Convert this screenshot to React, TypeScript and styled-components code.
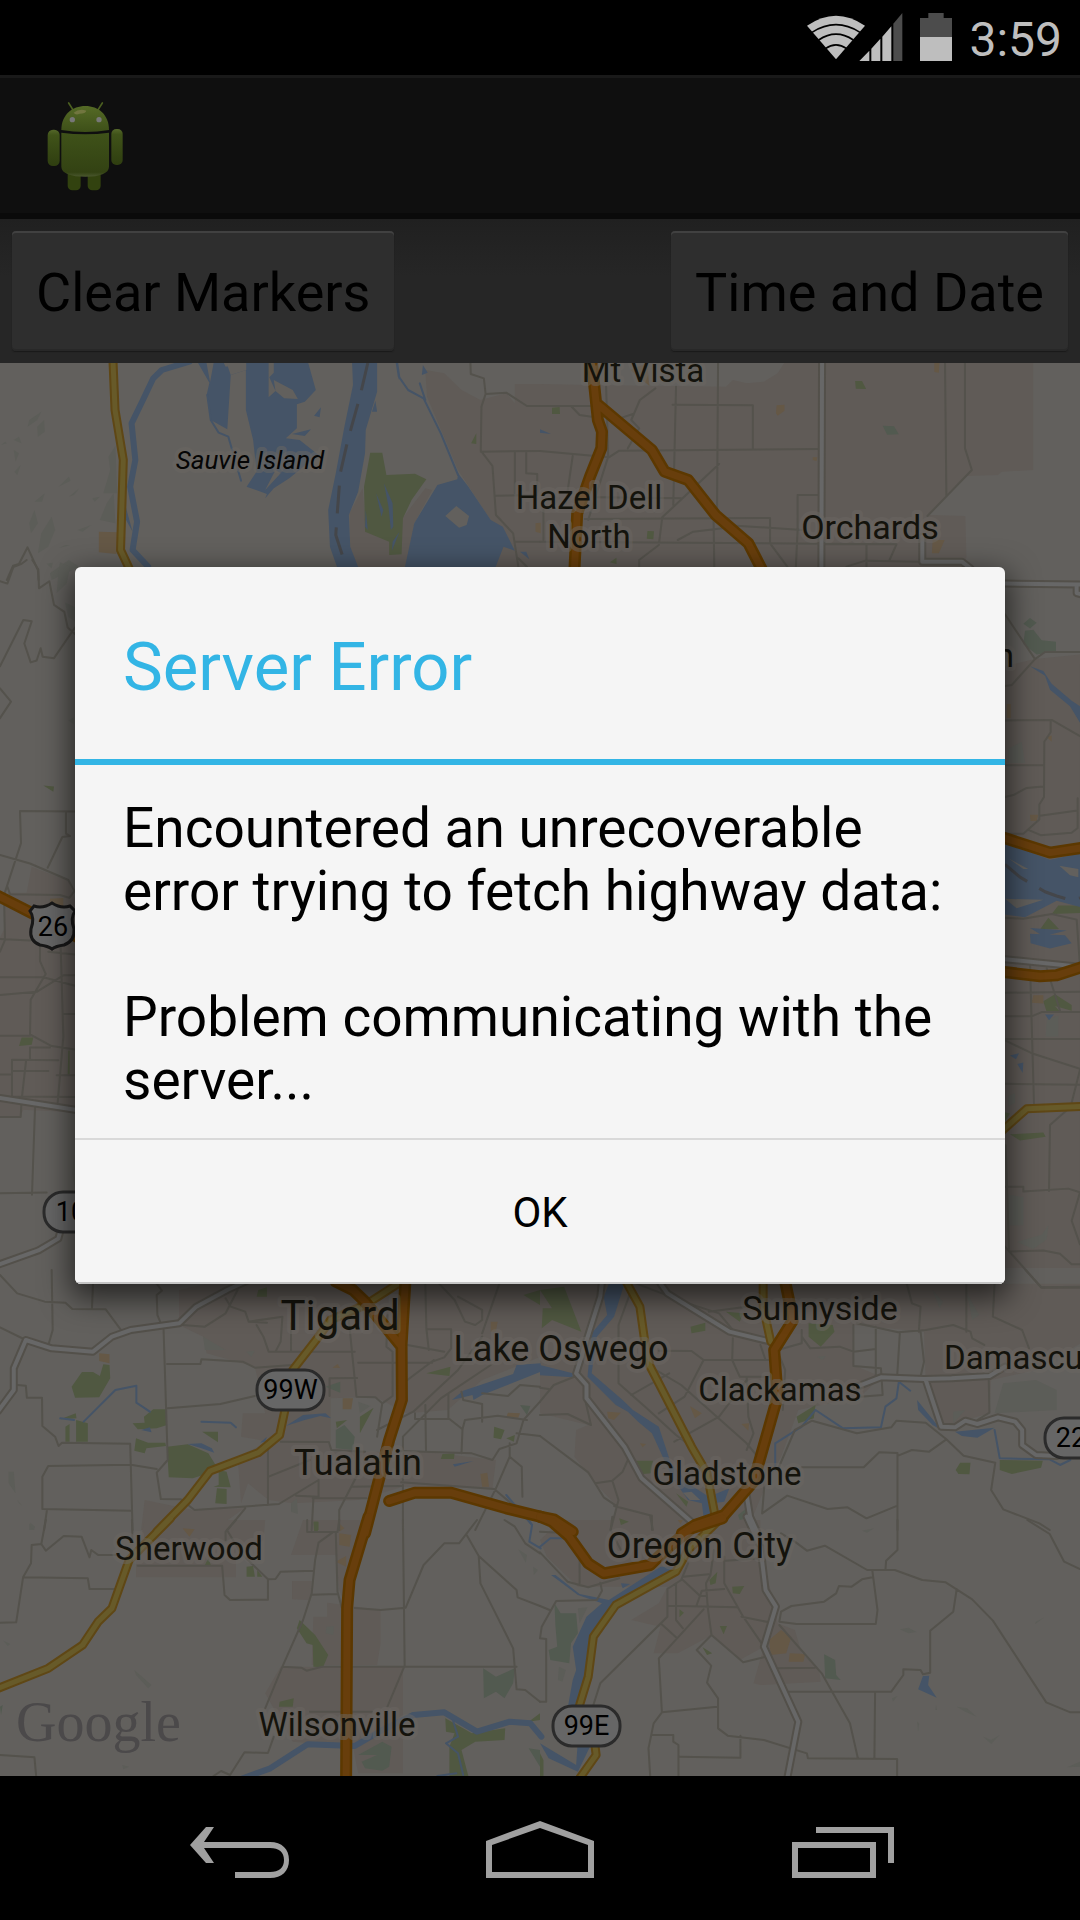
import React from "react";
import styled, { createGlobalStyle } from "styled-components";

const GlobalStyle = createGlobalStyle`
  *, *::before, *::after { box-sizing: border-box; }
  body {
    margin: 0;
    background: #000;
    font-family: Roboto, "Noto Sans", sans-serif;
    -webkit-font-smoothing: antialiased;
  }
  button { font-family: inherit; border: 0; margin: 0; padding: 0; cursor: pointer; }
`;

const Screen = styled.div`
  position: relative;
  display: flex;
  flex-direction: column;
  min-height: 100vh;
  overflow: hidden;
`;

const StatusBar = styled.header`
  display: flex;
  align-items: center;
  justify-content: flex-end;
  height: 75px;
  padding: 0 18px 2px;
  background: #000;
`;

const StatusIcon = styled.svg`
  display: block;
  flex: none;
  margin-right: 17px;
`;

const Clock = styled.time`
  font-size: 48px;
  line-height: 56px;
  color: #bebebe;
  padding-top: 6px;
`;

const ActionBar = styled.div`
  display: flex;
  align-items: center;
  height: 144px;
  padding: 2px 45px 0;
  background: #0f0f0f;
  border-top: 3px solid #191919;
  border-bottom: 6px solid #0a0a0a;
`;

const Toolbar = styled.div`
  display: flex;
  justify-content: space-between;
  padding: 12px;
  background: linear-gradient(#202020, #262626 40%);
`;

const ToolButton = styled.button`
  height: 120px;
  padding: 4px 24px 0;
  border-radius: 4px;
  background: #2e2e2e;
  box-shadow: inset 0 2px 0 #414141, inset 0 -2px 0 #282828, 0 1px 1px #1a1a1a;
  font-size: 54px;
  line-height: 64px;
  color: #000;
`;

const MapView = styled.svg`
  display: block;
  flex: 1 1 auto;
  width: 100%;
  background: #62605d;
`;

const NavBar = styled.nav`
  display: flex;
  height: 144px;
  padding: 0 90px;
  background: #000;
`;

const NavButton = styled.button`
  display: flex;
  flex: 1;
  align-items: center;
  justify-content: center;
  background: transparent;
`;

const Overlay = styled.div`
  position: absolute;
  inset: 75px 0 144px;
  display: flex;
  align-items: center;
  padding: 0 75px;
`;

const DialogShadow = styled.div`
  display: flex;
  flex: 1;
  border-radius: 6px;
  box-shadow: 0 10px 30px 4px rgba(0, 0, 0, 0.62);
`;

const Dialog = styled.section`
  flex: 1;
  overflow: hidden;
  border-radius: 6px;
  background: #f5f5f5;
`;

const DialogTitle = styled.h1`
  display: flex;
  align-items: center;
  height: 198px;
  margin: 0;
  padding: 8px 48px 0;
  border-bottom: 6px solid #33b5e5;
  font-size: 67px;
  font-weight: 400;
  line-height: 78px;
  color: #33b5e5;
`;

const DialogBody = styled.div`
  padding: 32px 48px 26px;
  font-size: 55px;
  line-height: 63px;
  color: #000;

  p { margin: 0; }
  p + p { margin-top: 63px; }
`;

const DialogButton = styled.button`
  display: block;
  width: 100%;
  height: 146px;
  padding-top: 4px;
  border-top: 2px solid #d9d9d9;
  border-bottom: 2px solid #c4c4c4;
  background: #f5f5f5;
  font-size: 42px;
  line-height: 50px;
  color: #000;
`;

type LayerKey =
  | "urban" | "hill" | "park" | "forest" | "sand" | "water" | "stream" | "creek"
  | "isle" | "border" | "minor" | "major" | "yellow" | "orange";

type Tile = { at: string } & Partial<Record<LayerKey, string>>;

const TILES: Tile[] = [
  {
    at: "translate(0 360) scale(0.34439 0.33333)",
    urban: "M1235,30 1290,40 1340,90 1395,120 1470,100 1495,130 1495,72 1570,72 1570,640 1440,640 1425,480 1330,330 1240,110Z M1053,385 1015,460 1017,560 1045,640 1180,640 1203,490 1255,390 1235,385 1165,480 1060,480Z",
    hill: "M120,155 85,180 80,200 108,180Z M128,180 130,215 110,230 108,200Z M335,258 340,400 300,400 320,330 315,290Z M330,400 335,490 290,480 310,430Z M100,450 110,490 90,520 85,490Z M200,350 205,362 170,380Z M230,385 215,405 200,410Z M150,470 160,510 140,560 110,580 120,520Z M130,400 122,425 100,425Z M55,230 62,250 40,240Z M290,410 275,425 268,415Z M200,600 230,620 150,660 145,640Z M40,270 55,280 45,305Z M15,245 20,250 3,255Z M265,495 240,515 225,510Z M60,315 50,345 42,335Z M190,555 203,556 170,565Z",
    park: "M1075,278 1110,278 1122,345 1205,341 1238,358 1195,420 1170,475 1166,583 1130,585 1130,545 1060,515 1057,380Z M1383,220 1383,252 1368,250Z",
    sand: "M287,515 340,517 338,582 287,577Z M1555,490 1570,488 1570,520 1555,515Z",
    water: "M575,9 650,9 655,20 715,9 895,9 917,90 885,125 862,133 862,205 830,235 870,240 925,285 905,300 840,355 795,385 770,415 775,402 716,380 745,335 735,240 714,150 714,30 670,45 660,208 612,180 600,105 608,68Z M1022,0 1025,75 1000,200 975,340 953,450 958,560 985,640 1047,640 1017,560 1013,465 1040,395 1060,280 1062,210 1095,95 1095,0Z M1330,340 1360,380 1425,480 1460,500 1495,572 1462,560 1432,640 1172,640 1203,490 1270,375 1328,358Z M1228,15 1242,38 1225,45Z M932,142 928,172 912,167Z M1090,122 1095,155 1080,155Z M848,222 903,208 885,228Z M365,440 385,515 366,480Z M1510,575 1528,575 1537,598Z M1115,370 1140,430 1142,500 1135,510 1128,440Z M1092,400 1113,450 1108,470Z M1160,515 1138,572 1140,545Z M1062,450 1068,510 1060,500Z",
    stream: "M550,5 470,30 445,55 415,120 382,190 393,300 378,380 398,485 385,570 430,620",
    creek: "M602,105 612,180 635,218 663,230 700,362 M1152,9 1158,50 1185,90 1230,115 1280,220 1330,345 M1152,0 1160,55 M1219,70 1235,120",
    isle: "M655,0 715,0 715,30 670,45Z M598,0 622,0 610,66Z M780,9 795,9 795,38 782,52 800,93 780,112Z M795,60 850,90 865,117 825,115 800,93Z M1325,438 1362,468 1355,495 1333,503 1293,468Z M800,330 815,340 770,390Z",
    border: "M1068,9 1045,110 1010,240 988,340 980,450 975,525 1005,620",
    minor: "M20,660 38,617 55,612 80,562 110,630 112,660 M1366,9 1367,42 1405,55 1410,102 1398,140 1396,272 1430,318 1440,465 1490,520 1505,620 M1410,102 1470,98 1530,138 1568,138 M1396,275 1568,273 M1495,275 1495,400 M1528,275 1528,340 1560,342 1560,405 1440,407 M1497,545 1568,545 M1505,595 1530,620",
    yellow: "M328,0 334,150 358,300 350,570 375,625",
  },
  {
    at: "translate(540 360) scale(0.34439 0.33333)",
    urban: "M0,72 145,75 540,80 560,60 600,70 650,65 690,40 715,0 1432,0 1432,330 1340,335 1330,345 1235,348 1130,465 1235,468 1238,590 1230,640 0,640Z",
    park: "M915,63 935,63 947,87 917,86Z M35,143 57,141 58,162 35,162Z M312,513 331,514 329,538 310,536Z M203,607 222,593 222,612Z",
    forest: "M995,197 1028,199 1042,223 1008,224Z",
    sand: "M687,136 710,134 710,152 690,167 685,160Z M1145,9 1160,9 1158,38 1145,36Z M262,30 318,78 310,9Z M1140,540 1175,540 1158,580 1138,580Z M792,292 805,292 803,303 792,300Z",
    water: "M0,208 32,222 0,218Z",
    minor: "M0,138 150,138 M90,138 115,165 150,170 M192,80 198,290 140,480 M0,273 200,292 230,272 808,267 M395,80 387,435 M385,134 618,136 618,268 M517,9 514,465 504,475 506,620 M335,85 290,120 265,180 288,205 255,265 M240,172 270,162 M95,288 75,430 M520,312 355,472 345,555 288,600 288,620 M130,477 668,474 668,550 718,620 M0,545 1035,553 M400,540 445,515 530,505 570,497 760,510 M748,510 748,405 808,405 M748,510 743,620 M1176,9 1180,408 M1234,9 1234,265 1254,330 1125,468 M1035,553 1015,600 M890,620 945,602 1105,605 M948,553 948,620 M165,412 410,415 M10,450 10,540 M830,553 1035,553",
    major: "M819,0 817,630 M1110,530 1110,605 1225,605 1250,625",
    orange: "M150,0 163,130 168,180 180,215 178,265 145,350 108,460 100,630 M170,135 325,270 362,335 430,360 510,465 605,550 645,630",
  },
  {
    at: "translate(0 560) scale(0.33333 0.47194)",
    urban: "M95,650 205,680 225,720 225,1170 70,1165 60,1180 0,1180 0,800 15,780 15,710 30,705 80,705Z",
    hill: "M180,5 210,15 200,50 170,70 175,30Z M195,90 225,100 225,130 205,120Z M140,8 158,6 155,18Z M205,340 222,333 222,348Z M222,1260 225,1330 217,1300Z",
    park: "M65,1012 100,1012 95,1027 57,1030Z M130,478 162,480 160,491Z M205,1040 209,1040 209,1090 203,1090Z",
    sand: "M150,718 190,716 190,735 150,735Z",
    minor: "M0,45 22,50 40,15 65,8 80,0 M97,0 115,20 117,60 148,45 162,95 193,110 203,143 225,157 M0,225 70,127 95,130 73,177 92,217 110,213 122,187 128,205 162,208 225,143 M0,272 33,300 0,335 M225,533 60,532 63,600 12,710 15,805 0,830 M198,533 198,580 210,585 187,587 143,652 M0,625 90,643 205,678 222,700 M22,692 30,708 180,710 208,716 225,700 M0,803 90,806 M120,820 120,850 137,877 92,932 90,1005 155,1030 225,1037 M145,830 225,836 M0,884 130,884 225,902 M0,922 110,915 190,880 225,880 M182,820 190,1010 173,1150 M190,962 225,962 M0,1008 90,1008 M175,1060 36,1059 36,1135 M0,1090 36,1090 M90,1033 150,1033 M90,1033 90,1058 M78,1062 66,1137 M36,1083 145,1083 M170,1092 225,1092 M0,1180 62,1180 64,1155 M105,1160 96,1345 M36,1137 225,1138 M0,1342 140,1340",
    major: "M0,1140 225,1165 M180,1425 175,1438 115,1463 -5,1493",
    orange: "M-5,712 100,750 235,800",
  },
  {
    at: "translate(980 560) scale(0.33333 0.47194)",
    urban: "M75,225 165,210 300,200 300,1500 75,1500Z",
    hill: "M85,400 125,385 135,430 85,430Z M200,975 235,965 235,1010 197,1010Z M85,1135 105,1130 105,1150 85,1158Z M110,1445 185,1430 205,1410 200,1440 160,1460Z M85,1345 130,1350 130,1410 85,1410Z",
    park: "M75,655 122,688 75,692Z M215,750 235,732 300,732 300,748Z M205,758 237,782 180,783Z M190,935 225,920 275,943 275,955 225,945 240,957 200,958Z M90,1217 190,1213 197,1222 120,1230Z M75,1170 90,1173 75,1190Z",
    forest: "M135,150 160,148 185,170 228,173 228,193 170,200 130,178Z M130,135 150,123 170,133 150,145Z",
    sand: "M150,540 175,540 170,553 152,553Z M160,922 190,922 190,940 155,938Z M80,305 92,305 92,335 80,335Z M200,375 215,372 215,385Z",
    water: "M60,595 210,635 300,622 300,735 230,722 135,757 60,750Z M150,225 190,235 215,262 275,298 300,310 300,345 270,310 210,275 195,245Z M150,792 255,795 275,812 210,823 152,812Z M150,780 260,785 190,797Z M90,1050 117,1045 108,1058Z M112,1068 130,1065 128,1087Z M195,963 222,963 207,975Z",
    isle: "M85,632 145,655 130,655Z M238,648 295,655 295,672 270,668Z M75,718 190,720 110,738Z",
    border: "M75,645 120,672 195,703 230,712 270,720 300,716",
    minor: "M75,115 165,210 195,195 300,195 M75,267 95,265 165,210 M75,340 215,339 300,373 M212,339 212,365 193,385 192,502 178,518 178,550 130,580 75,580 M75,435 190,435 M75,502 100,498 140,483 190,480 M180,542 293,531 M145,572 182,583 275,578 293,568 293,505 M75,758 130,760 215,750 290,762 300,860 M150,855 162,1155 M75,917 300,915 M75,967 155,967 185,958 300,958 M75,1015 300,1015 M75,1018 155,1045 300,1078 M75,1110 300,1112 M300,1080 275,1150 M262,1165 210,1197 207,1337 M77,1240 87,1460 M75,1328 130,1328 130,1338 265,1332 300,1340 275,1400 300,1450 M87,1465 190,1463 240,1470 275,1492 300,1492 M75,1455 185,1542 300,1542 M200,865 240,955",
    major: "M75,50 305,52 M290,52 290,70 305,73 M75,846 305,862",
    yellow: "M65,1210 140,1163 305,1158",
    orange: "M60,586 210,620 305,610 M60,872 180,882 230,880 305,863",
  },
  {
    at: "translate(0 1270) scale(0.34439 0.33333)",
    urban: "M520,60 600,41 1570,41 1570,260 1400,330 1300,420 1180,430 1090,380 960,385 960,515 780,515 700,500 705,430 770,430 740,290 600,250 590,200 520,165Z M780,515 955,515 960,545 1230,545 1440,570 1430,655 1170,650 1040,690 850,700 780,690 720,640 700,700 690,560Z M420,690 560,720 710,715 620,780 410,780Z",
    hill: "M25,605 40,605 45,670 25,640Z M50,690 65,707 55,700Z M85,760 100,780 85,780Z M715,245 740,242 730,260Z M1040,395 1075,408 1045,430Z M845,700 862,685 865,732 845,725Z M590,200 655,240 595,240Z",
    park: "M238,306 270,306 290,318 300,283 318,285 320,325 288,382 218,383 208,350Z M175,448 220,430 222,445Z M190,470 202,462 202,515 190,515Z M221,450 255,460 255,515 221,515Z M385,460 420,458 418,440 445,418 485,418 485,465 455,475 400,478Z M395,505 430,518 480,518 482,528 425,535 420,550 390,542Z M587,485 633,485 633,517Z M485,530 545,523 605,550 635,600 560,625 490,622Z M635,600 658,605 670,652 620,650 635,645Z M630,655 658,657 658,702 625,700Z M1238,310 1308,290 1305,318Z M975,455 1008,450 978,475Z M1045,440 1085,413 1045,490Z M1435,470 1465,480 1455,508 1433,503Z M1470,505 1495,495 1492,515Z M1285,552 1320,550 1318,567 1280,567Z M750,60 775,52 775,80 745,80Z M1520,75 1568,60 1568,105Z M912,755 925,755 925,780 912,780Z",
    forest: "M975,480 1000,465 1030,500 1025,540 975,535Z M945,350 988,335 988,368Z M1510,405 1540,408 1530,435Z",
    sand: "M288,250 318,253 318,280 288,273Z M995,385 1025,385 1020,418 995,418Z M965,293 980,282 988,294Z M1475,428 1510,430 1505,443 1470,442Z M1395,612 1415,608 1420,650 1400,650Z M1425,155 1445,155 1440,185 1425,185Z",
    water: "M545,522 585,520 615,535 622,548 585,535Z M830,468 880,435 945,430 962,445 930,438 885,450Z M755,518 775,500 770,515Z M410,480 435,472 440,487Z M1312,390 1345,362 1490,312 1500,285 1570,280 1570,305 1400,375 1375,390 1372,375Z M1315,583 1375,573 1320,590Z",
    creek: "M175,445 215,450 M243,455 335,360 396,347 396,398 435,425 M585,455 670,458 685,472 M1470,675 1545,765",
    minor: "M0,15 50,70 130,95 190,98 210,117 307,118 350,178 M150,0 153,180 142,220 M270,41 267,117 M0,172 75,210 M455,41 470,62 455,75 457,135 465,155 M475,180 487,570 455,608 467,687 525,688 565,720 810,702 925,630 M485,282 582,282 585,268 705,275 740,293 850,285 M487,415 640,402 740,378 M50,345 75,347 78,383 122,383 123,468 160,500 170,528 180,518 378,521 385,780 M123,620 140,588 380,584 455,597 M123,620 123,717 382,722 M136,722 128,780 M530,165 595,170 655,130 690,60 M655,85 670,110 712,125 722,155 775,158 M745,165 765,200 780,245 1030,245 M845,160 845,245 M722,155 820,140 815,215 800,245 M1010,120 1035,380 1090,382 1110,400 1095,500 M1040,278 1255,278 M957,378 957,325 1037,324 M1125,130 1122,230 1140,245 1140,378 1110,400 M1235,41 1238,175 1245,240 M1255,275 1290,262 1310,235 1310,178 1240,178 M1275,41 1320,90 1350,155 1380,165 1400,150 1400,120 1330,80 M1450,41 1400,190 M1183,225 1290,245 M1170,500 1170,630 M1170,500 1280,385 1425,285 M1095,480 1200,425 1330,300 1400,200 M1235,405 1237,545 M1205,430 1205,447 1305,447 1343,478 1350,450 1445,437 1530,450 M1302,370 1302,445 M1340,365 1345,390 1400,402 1400,455 M1400,370 1475,378 1510,345 1568,350 M1343,478 1340,550 M1568,395 1520,450 1500,520 1450,537 1430,570 1370,550 1160,543 M1500,490 1568,498 M1480,520 1480,560 1440,655 1380,780 M1480,560 1515,590 1517,680 M815,515 955,516 962,540 1060,545 M778,515 778,705 M780,620 900,570 M925,630 925,680 860,677 M1165,637 1435,657 1530,740 M1020,650 1165,648 M1045,600 985,720 985,780 M908,685 1065,685 M910,685 905,780 M712,715 660,780 M1170,645 1170,780 M1183,330 1260,270",
    major: "M-5,423 40,360 40,295 75,210 150,235 270,245 325,200 380,180 520,160 570,110 660,60 720,31",
    yellow: "M1165,35 1060,105 960,150 925,200 850,300 M827,422 812,495 750,548 610,603 545,690 455,785",
    orange: "M975,35 1025,60 1060,95 1166,230 M1178,20 1166,225 1167,390 1130,510 1060,790 M1130,693 1205,668 1310,668 1470,715 1568,740",
  },
  {
    at: "translate(540 1270) scale(0.34439 0.33333)",
    urban: "M0,41 1570,41 1570,220 1440,300 1310,330 1305,430 1170,470 1120,330 1115,185 910,165 910,285 990,320 930,380 750,420 700,560 650,660 600,785 200,785 225,710 160,640 100,560 105,480 140,465 0,430Z",
    hill: "M805,260 830,258 820,270Z M1140,60 1170,95 1160,115Z M1240,70 1275,135 1255,150Z M1200,425 1235,420 1200,460Z M1345,340 1440,330 1500,360 1500,420 1320,430Z",
    park: "M0,60 70,50 120,185 35,150 5,175 8,115 35,115Z M437,170 480,158 480,182 440,190Z M780,160 850,165 855,185 815,230 780,200Z M745,440 800,405 795,445 750,460Z M280,572 328,572 322,610 300,612Z M1335,570 1460,572 1455,593 1370,612 1335,600Z M1207,600 1220,578 1250,578 1247,613 1215,612Z M540,125 590,130 580,155Z M230,745 258,755 235,765Z M395,670 430,695 425,710Z",
    forest: "M575,735 600,715 600,745 580,750Z",
    sand: "M435,408 470,430 450,445Z M585,462 607,460 605,482Z M195,425 235,428 215,450 198,445Z M290,520 308,522 298,532Z",
    water: "M200,41 245,41 215,140 165,200 150,310 240,390 270,420 345,470 380,580 430,640 490,680 550,655 535,695 500,700 490,745 475,740 470,700 430,690 385,625 325,490 285,455 255,425 220,405 138,320 150,190 195,135 185,80Z M0,285 95,310 95,322 0,316Z M1095,390 1165,480 1140,465 1098,420Z M1205,485 1320,473 1270,503 1225,498Z",
    isle: "M415,668 440,665 465,690 435,690Z",
    creek: "M683,600 683,520 760,470 800,420 880,475 990,472 1003,410 1035,385 1042,335 1075,362 M1320,480 1335,565 1480,568 1510,585 1540,570",
    minor: "M0,353 25,357 M0,395 40,345 105,318 M0,435 80,432 148,465 130,385 M0,498 140,607 185,682 225,710 M160,640 210,632 240,605 255,570 M210,632 228,690 205,780 M215,708 325,737 325,780 M265,60 228,165 228,340 310,415 395,495 440,530 M265,375 375,310 M345,242 440,243 475,270 665,270 M320,290 410,345 600,520 640,570 M345,430 420,380 475,270 M390,515 520,440 600,330 M560,205 558,270 580,320 670,320 M640,225 655,270 M600,320 605,440 620,490 600,540 M690,245 712,300 705,420 M690,240 760,220 760,180 M280,41 430,100 530,165 M490,125 600,110 M430,100 520,130 560,180 M645,730 655,600 M690,600 740,480 790,452 920,490 1020,472 1035,452 1120,458 1180,508 1130,545 1080,540 1040,557 M760,592 940,592 985,547 1038,549 1038,780 M1180,508 1230,557 1322,578 1310,660 1345,718 1450,760 1480,780 M645,730 718,677 835,717 893,712 948,745 1038,707 M760,200 785,235 870,230 910,245 975,237 M910,165 910,288 990,295 995,375 930,380 M975,170 975,320 M920,160 1040,187 1120,180 1200,165 1250,185 1255,205 1290,225 M1045,187 1037,320 M1105,185 1115,275 1105,320 M1065,41 1080,100 1105,110 1100,185 M1238,41 1238,185 M1320,41 1315,140 1400,180 1420,235 M1410,0 1455,52 1568,50 M1303,330 1305,428 1270,450",
    major: "M180,35 175,80 105,310 135,345 135,385 245,530 295,625 450,765 M350,41 370,70 550,185 670,215 M920,350 990,322 1115,327 1195,325 1305,318 1350,290 M1120,330 1165,470 1205,472 1235,452 1270,462 1330,442 1380,455 1400,480 1400,525 1440,555 1500,558 M600,675 610,740 630,785",
    yellow: "M250,35 290,110 305,220 320,290 440,530 485,610 508,735 480,785 M648,35 648,110 670,215",
    orange: "M0,740 40,748 95,785 M412,790 450,765 535,735 620,635 690,380 680,240 735,150 712,35",
  },
  {
    at: "translate(0 1520) scale(0.34439 0.33333)",
    urban: "M420,0 770,0 765,60 685,120 685,172 395,172 395,130Z M880,0 1060,0 1020,180 1005,260 985,210 975,105 845,105Z M848,183 905,183 900,240 848,238Z M950,248 1105,270 1105,370 1095,435 905,435 910,290 950,290Z M815,440 1170,440 1170,760 1040,760 1025,680 850,665 770,520Z",
    hill: "M390,450 440,495 430,505 395,465Z M88,8 102,20 98,30 88,20Z M10,362 30,372 22,378Z M948,320 970,318 968,345 945,340Z M1505,88 1530,105 1527,128Z M1548,140 1562,150 1550,165Z M355,735 375,740 358,748Z",
    park: "M870,300 915,345 953,405 938,442 910,440 908,375 890,370 862,325Z M1293,595 1370,640 1467,625 1465,660 1380,665 1340,690 1360,768 1305,768 1305,680 1320,640 1295,635Z M812,545 853,535 850,560 810,560Z M716,140 735,138 740,170 716,170Z M747,150 762,170 747,170Z M595,135 605,115 612,135Z M910,5 923,5 923,33 912,33Z M1568,580 1568,600 1535,605Z",
    forest: "M1403,445 1440,470 1495,445 1490,490 1465,535 1440,515 1405,535Z M1040,705 1110,665 1137,680 1130,740 1110,752 1060,745 1050,725 1095,705Z M1535,685 1568,690 1568,740Z M0,560 8,555 3,585Z",
    sand: "M530,25 565,28 550,50Z M985,40 1020,45 1015,80 985,75Z M975,125 1005,108 1005,140Z M985,10 1000,25 985,35Z",
    stream: "M705,775 785,745 893,673 1030,678 1110,630 1200,585 1290,577 1385,635 1480,605 1540,610 1572,650",
    creek: "M1315,600 1330,650 1295,670 1330,700 1345,765 M1535,0 1545,15 1537,65 1570,85 M1270,768 1325,760",
    minor: "M133,0 120,72 92,75 90,130 67,172 47,307 0,308 M120,72 133,92 185,48 237,50 260,112 265,90 285,105 335,105 M67,172 255,175 260,207 335,207 M383,0 385,60 M400,137 645,137 652,225 668,240 778,239 778,178 M685,0 655,35 655,60 M662,35 700,100 778,178 800,177 815,155 910,152 M892,0 892,36 980,36 985,0 M965,38 925,68 915,120 905,220 880,300 820,440 770,565 M975,38 980,215 992,262 M905,224 980,222 M1030,264 1105,270 1178,263 1230,135 1290,70 1333,70 1385,0 M1170,0 1175,437 1125,560 M820,440 875,443 890,452 935,440 1500,440 M1355,45 1390,108 1395,190 1490,385 1500,508 1525,510 1568,545 M1390,108 1500,210 1503,232 1568,258 M1465,0 1495,20 1525,70 1568,100 M900,575 1080,575 M795,650 778,699 710,697 668,765 642,753 620,768 M0,705 100,712 105,768",
    yellow: "M495,-5 375,120 325,265 285,305 240,375 140,445 -5,505",
    orange: "M1070,-10 1015,180 1008,265 1005,775",
  },
  {
    at: "translate(540 1520) scale(0.34439 0.33333)",
    urban: "M60,0 640,0 640,80 680,260 690,310 740,330 760,400 810,450 815,485 640,495 620,490 650,380 580,420 500,345 400,400 330,400 350,320 265,300 345,250 370,200 300,200 110,200 20,110 0,60Z",
    hill: "M1045,328 1070,323 1093,336 1070,340Z M1465,292 1437,313 1440,305Z M1210,560 1240,565 1268,590 1235,575Z M1287,650 1310,660 1335,645 1310,672Z M1150,555 1153,570 1148,570Z M110,265 138,262 115,310Z M1095,605 1101,610 1098,635Z M1530,742 1568,725 1568,740Z M1022,535 1038,528 1025,545Z M935,32 970,25 950,38Z M55,440 75,450 65,485 52,480Z",
    park: "M515,155 510,190 495,195 492,180Z M558,200 593,198 580,222 560,220Z M522,318 543,318 533,343Z M472,382 500,400 485,405Z M405,268 418,278 405,292Z M0,700 10,720 10,768 0,768Z",
    forest: "M42,250 60,280 105,280 110,340 90,370 85,430 30,420 25,390 50,380 45,320Z M825,403 857,420 860,465 873,480 828,475Z",
    sand: "M665,360 700,330 730,350 715,400 670,405Z M725,400 770,402 765,425 722,425Z M400,0 415,0 408,12Z",
    water: "M350,140 390,140 400,150 200,265 155,340 145,400 115,565 82,555 95,480 105,450 95,380 135,290 180,250 110,225 45,175 32,165 45,165 115,222 200,240Z M110,660 145,680 110,755 25,715 0,670 105,735Z M1112,468 1130,467 1127,495 1152,533 1098,508Z M235,190 262,192 240,205Z",
    creek: "M0,80 30,55 90,55",
    minor: "M0,97 80,185 140,202 230,175 M115,110 115,190 M175,188 180,212 165,240 47,243 5,320 0,355 18,357 18,545 0,545 M0,258 28,270 M0,35 60,38 M430,130 410,180 370,207 370,290 175,490 155,555 M395,190 395,300 415,325 M415,180 465,228 485,228 M350,310 395,352 M475,268 345,415 354,577 515,560 M370,257 572,262 M505,90 495,165 482,190 487,262 498,345 455,390 497,437 485,488 517,535 517,625 545,647 650,660 775,700 778,715 1037,717 1037,768 M498,345 590,427 650,412 M535,110 535,190 590,290 650,380 M585,290 665,307 M415,170 490,163 M540,122 640,115 M455,255 470,212 535,207 M700,40 740,65 775,92 827,77 950,150 1030,150 1110,180 1178,187 1255,238 1315,302 1470,547 1540,577 1568,577 M1038,0 1038,90 1005,122 1003,150 M965,152 980,270 975,312 745,312 695,305 700,275 730,258 825,245 860,220 868,198 905,200 935,178 965,172 M1210,207 1200,275 1133,332 1133,458 1112,463 1105,450 1055,448 1055,465 1020,515 720,515 M973,515 971,715 M695,315 818,460 900,610 923,715 M690,445 798,443 M354,577 330,610 315,685 320,768 M325,645 387,645 387,665 402,675 402,768 M405,710 582,713 582,647 M1415,0 1480,42 1522,125 1568,147 M210,-10 205,30 235,90 M320,-10 328,30",
    major: "M600,-10 640,80 655,210 685,260 650,380 750,605 718,775",
    yellow: "M520,0 430,90 395,155 220,255 155,350 140,470 115,555 M160,680 163,705 115,775",
    orange: "M0,-10 35,5 85,50 140,130 185,160 320,135 375,80 440,25 530,-5",
  },
];

type Pass = { key: LayerKey; fill?: string; stroke?: string; width?: number; dash?: string };

const PASSES: Pass[] = [
  { key: "urban", fill: "#605b57" },
  { key: "hill", fill: "#5c5d58" },
  { key: "park", fill: "#505841" },
  { key: "forest", fill: "#525a50" },
  { key: "sand", fill: "#655846" },
  { key: "water", fill: "#455467" },
  { key: "stream", stroke: "#455467", width: 6 },
  { key: "creek", stroke: "#455467", width: 2 },
  { key: "isle", fill: "#62605d" },
  { key: "border", stroke: "#44464a", width: 3, dash: "28 14" },
  { key: "minor", stroke: "#54524c", width: 2 },
  { key: "major", stroke: "#53504a", width: 8 },
  { key: "major", stroke: "#676767", width: 4 },
  { key: "yellow", stroke: "#5f4715", width: 9 },
  { key: "yellow", stroke: "#675a29", width: 5 },
  { key: "orange", stroke: "#5c3800", width: 12 },
  { key: "orange", stroke: "#683e0c", width: 7 },
];

type LabelSpec = { text: string; x: number; y: number; size: number; anchor?: "start" | "end"; italic?: boolean };

const LABELS: LabelSpec[] = [
  { text: "Mt Vista", x: 643, y: 382, size: 33 },
  { text: "Sauvie Island", x: 250, y: 469, size: 26, italic: true },
  { text: "Hazel Dell", x: 589, y: 509, size: 33 },
  { text: "North", x: 589, y: 548, size: 33 },
  { text: "Orchards", x: 870, y: 539, size: 34 },
  { text: "n", x: 1014, y: 667, size: 33, anchor: "end" },
  { text: "Tigard", x: 340, y: 1330, size: 42 },
  { text: "Sunnyside", x: 820, y: 1320, size: 34 },
  { text: "Lake Oswego", x: 561, y: 1361, size: 36 },
  { text: "Damascus", x: 944, y: 1369, size: 33, anchor: "start" },
  { text: "Clackamas", x: 780, y: 1401, size: 33 },
  { text: "Tualatin", x: 358, y: 1475, size: 36 },
  { text: "Gladstone", x: 727, y: 1485, size: 33 },
  { text: "Oregon City", x: 700, y: 1558, size: 36 },
  { text: "Sherwood", x: 189, y: 1560, size: 33 },
  { text: "Wilsonville", x: 337, y: 1736, size: 33 },
];

const SHIELDS = [
  { text: "99W", x: 257, y: 1370, w: 67 },
  { text: "99E", x: 553, y: 1706, w: 67 },
  { text: "224", x: 1045, y: 1418, w: 67 },
  { text: "10", x: 44, y: 1192, w: 54 },
];

const PlaceName = styled.text<{ $size: number; $italic?: boolean }>`
  font-size: ${(p) => p.$size}px;
  font-style: ${(p) => (p.$italic ? "italic" : "normal")};
  fill: ${(p) => (p.$italic ? "#050505" : "#14130c")};
  stroke: rgba(106, 102, 98, 0.5);
  stroke-width: 8px;
  stroke-linejoin: round;
  paint-order: stroke;
`;

const ShieldText = styled.text`
  font-size: 27px;
  fill: #000;
`;

const Watermark = styled.text`
  font-family: "Liberation Serif", serif;
  font-size: 56px;
  fill: #4b494a;
`;

function CityMap() {
  return (
    <MapView viewBox="0 363 1080 1413" preserveAspectRatio="xMidYMid slice" role="img" aria-label="Map">
      {PASSES.map((pass, i) => (
        <g
          key={i}
          fill={pass.fill ?? "none"}
          stroke={pass.stroke ?? "none"}
          strokeWidth={pass.width}
          strokeDasharray={pass.dash}
          strokeLinejoin="round"
          strokeLinecap={pass.dash ? "butt" : "round"}
        >
          {TILES.map((tile) =>
            tile[pass.key] ? (
              <path key={tile.at} d={tile[pass.key]} transform={tile.at} vectorEffect="non-scaling-stroke" />
            ) : null
          )}
        </g>
      ))}

      {LABELS.map((l) => (
        <PlaceName key={l.text} x={l.x} y={l.y} textAnchor={l.anchor ?? "middle"} $size={l.size} $italic={l.italic}>
          {l.text}
        </PlaceName>
      ))}

      {SHIELDS.map((s) => (
        <g key={s.text}>
          <rect x={s.x} y={s.y} width={s.w} height="40" rx="19" fill="#666" stroke="#2b2b2b" strokeWidth="3" />
          <ShieldText x={s.x + s.w / 2} y={s.y + 29} textAnchor="middle">
            {s.text}
          </ShieldText>
        </g>
      ))}
      <path
        d="M34,906 Q43,909 52,903 Q61,909 70,906 L75,911 Q70,918 74,929 Q75,941 64,945 Q56,946 52,949 Q48,946 40,945 Q29,941 31,929 Q35,918 30,911Z"
        fill="#666"
        stroke="#181818"
        strokeWidth="3"
      />
      <ShieldText x="53" y="936" textAnchor="middle">26</ShieldText>
      <Watermark x="16" y="1741">Google</Watermark>
    </MapView>
  );
}

function AndroidRobot() {
  return (
    <svg width="80" height="92" viewBox="136 93 240 276" aria-hidden="true">
      <defs>
        <linearGradient id="head" x1="0" y1="0" x2="0" y2="1">
          <stop offset="0" stopColor="#556a26" />
          <stop offset="1" stopColor="#3d4f18" />
        </linearGradient>
        <linearGradient id="torso" x1="0" y1="0" x2="0" y2="1">
          <stop offset="0" stopColor="#3f5219" />
          <stop offset="0.9" stopColor="#334213" />
          <stop offset="1" stopColor="#4a572e" />
        </linearGradient>
        <linearGradient id="arm" x1="0" y1="0" x2="0" y2="1">
          <stop offset="0" stopColor="#55682a" />
          <stop offset="0.15" stopColor="#405319" />
          <stop offset="1" stopColor="#2f3e10" />
        </linearGradient>
      </defs>
      <path d="M207,99 221,121 M308,99 294,121" stroke="#4b5f20" strokeWidth="5" strokeLinecap="round" />
      <rect x="204" y="300" width="39" height="61" rx="14" fill="#32420f" />
      <rect x="264" y="300" width="39" height="61" rx="14" fill="#32420f" />
      <rect x="144" y="179" width="36" height="109" rx="16" fill="url(#arm)" />
      <rect x="335" y="177" width="34" height="108" rx="15" fill="url(#arm)" />
      <path d="M185,180 C185,134 218,108 257,108 C296,108 328,134 328,180 Q257,192 185,180Z" fill="url(#head)" />
      <path d="M185,188 Q257,198 328,188 L328,290 C328,310 300,320 257,320 C214,320 185,310 185,290Z" fill="url(#torso)" />
      <path d="M222,128 Q238,115 260,122 Q258,131 240,131 Q228,137 222,128Z" fill="#71763f" />
      <circle cx="218" cy="149" r="8" fill="#777" />
      <circle cx="298" cy="149" r="8" fill="#777" />
    </svg>
  );
}

export default function App() {
  return (
    <>
      <GlobalStyle />
      <Screen>
        <StatusBar>
          <StatusIcon width="96" height="48" viewBox="83 36 288 144" aria-hidden="true">
            <path d="M83,74 Q170,14 257,74 L170,175Z" fill="#bebebe" />
            <path
              d="M98,94 Q170,48 242,94 M118,117 Q170,82 222,117 M138,143 Q170,120 202,143"
              fill="none"
              stroke="#000"
              strokeWidth="5"
            />
            <path d="M240,180 270,149 270,180Z M276,143 303,113 303,180 276,180Z M309,107 336,76 336,180 309,180Z" fill="#bebebe" />
            <path d="M342,68 369,36 369,180 342,180Z" fill="#4c4c4c" />
          </StatusIcon>
          <StatusIcon width="32" height="48" viewBox="417 36 96 144" aria-hidden="true">
            <path d="M442,36 488,36 488,51 513,51 513,108 417,108 417,51 442,51Z" fill="#4c4c4c" />
            <path d="M417,108H513V180H417Z" fill="#bebebe" />
          </StatusIcon>
          <Clock>3:59</Clock>
        </StatusBar>

        <ActionBar>
          <AndroidRobot />
        </ActionBar>

        <Toolbar>
          <ToolButton type="button">Clear Markers</ToolButton>
          <ToolButton type="button">Time and Date</ToolButton>
        </Toolbar>

        <CityMap />

        <NavBar>
          <NavButton type="button" aria-label="Back">
            <svg width="120" height="60" viewBox="180 1818 120 60" aria-hidden="true">
              <path
                fill="#a0a0a0"
                d="M190,1845 206,1827H214L204,1842H270C282,1842 289,1849 289,1860C289,1871 282,1878 270,1878H235V1872H270C279,1872 284,1868 284,1860C284,1852 279,1848 270,1848H204L214,1863H206Z"
              />
            </svg>
          </NavButton>
          <NavButton type="button" aria-label="Home">
            <svg width="120" height="60" viewBox="480 1818 120 60" aria-hidden="true">
              <path
                fill="#a0a0a0"
                fillRule="evenodd"
                d="M486,1841 540,1821 594,1841V1878H486Z M492,1845V1872H588V1845L540,1828Z"
              />
            </svg>
          </NavButton>
          <NavButton type="button" aria-label="Recent apps">
            <svg width="120" height="60" viewBox="780 1818 120 60" aria-hidden="true">
              <path
                fill="#a0a0a0"
                fillRule="evenodd"
                d="M792,1842H876V1878H792Z M798,1848V1872H870V1848Z M816,1827H894V1863H888V1833H816Z"
              />
            </svg>
          </NavButton>
        </NavBar>

        <Overlay>
          <DialogShadow>
            <Dialog role="alertdialog" aria-labelledby="dialog-title" aria-describedby="dialog-body">
              <DialogTitle id="dialog-title">Server Error</DialogTitle>
              <DialogBody id="dialog-body">
                <p>Encountered an unrecoverable error trying to fetch highway data:</p>
                <p>Problem communicating with the server...</p>
              </DialogBody>
              <DialogButton type="button">OK</DialogButton>
            </Dialog>
          </DialogShadow>
        </Overlay>
      </Screen>
    </>
  );
}
